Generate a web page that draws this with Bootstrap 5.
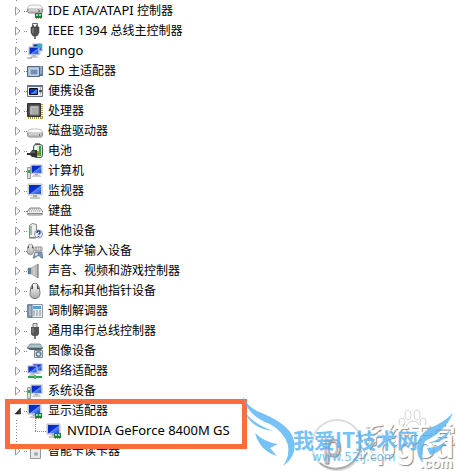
<!DOCTYPE html>
<html lang="zh-CN">
<head>
<meta charset="utf-8">
<meta name="viewport" content="width=device-width, initial-scale=1">
<title>设备管理器</title>
<link href="https://cdn.jsdelivr.net/npm/bootstrap@5.3.0/dist/css/bootstrap.min.css" rel="stylesheet">
<style>
body{background:#fff;color:#000;font-family:"Noto Sans","Noto Sans CJK SC",sans-serif;font-size:12px;line-height:20px}
.device-window{min-height:100vh;overflow:hidden;padding-top:1px}
.device-row{height:20px;padding-left:15px}
.device-row svg{flex:none}
.tree-toggle{width:9px;height:20px;padding:0;border:0;background:none;display:flex;align-items:center}
.dots{width:3px;height:20px;background:linear-gradient(90deg,#888 1px,transparent 1px) 0 50%/2px 1px repeat-x}
.device-icon{width:16px;height:16px;margin-right:5px}
.latin{font-size:13px;line-height:1}
.trunk{background:linear-gradient(#888 1px,transparent 1px) 16px 0/1px 3px repeat-y;top:-1px;bottom:12px;width:17px}
.toggle-back{padding:2px 0;background:#fff;height:16px;width:6px}
.child-row{padding-left:35px}
.child-row .dots{width:11px}
.branch{left:35px;top:17px;height:14px;width:1px;background:linear-gradient(#888 1px,transparent 1px) 0 0/1px 2px repeat-y}
.highlight-frame{left:5px;top:-2px;bottom:-8px;width:242px;border:5px solid #ff6c3b;z-index:2}
.watermark{right:0;bottom:0;z-index:3;pointer-events:none}
.embossed{text-shadow:1px 1px 1px #888}
.han-mark{font-family:"Noto Sans CJK SC",sans-serif}
.site-mark{font-family:"Liberation Sans",sans-serif}
.blue-site{font-family:"DejaVu Sans",sans-serif}
</style>
<script src="https://cdn.jsdelivr.net/npm/bootstrap@5.3.0/dist/js/bootstrap.bundle.min.js"></script>
</head>
<body>
<svg width="0" height="0" class="position-absolute" aria-hidden="true">
<defs>
<linearGradient id="blue" x1="0" y1="0" x2="1" y2="1"><stop offset="0" stop-color="#0828c0"/><stop offset=".5" stop-color="#0a30d0"/><stop offset=".55" stop-color="#5a8cf4"/><stop offset="1" stop-color="#1848d8"/></linearGradient>
<linearGradient id="silver" x1="0" y1="0" x2="0" y2="1"><stop offset="0" stop-color="#fafafa"/><stop offset="1" stop-color="#aaa"/></linearGradient>
<symbol id="closed" viewBox="0 0 6 10"><path d="M.5 1v8l4.500-4z" fill="#fff" stroke="#999"/></symbol>
<symbol id="open" viewBox="0 0 6 10"><path d="M5.500 2v6H0z" fill="#333" stroke="#111" stroke-width=".5"/></symbol>
<symbol id="card" viewBox="0 0 8 6"><path d="M0 0h7v5H0z" fill="#168040"/><path d="M1 1h2v2H1zM4 1h2v2H4z" fill="#9fd4a8"/><path d="M1 5h1v1H1zM3 5h1v1H3zM5 5h1v1H5z" fill="#b99c30"/></symbol>
<symbol id="disk" viewBox="0 0 16 16"><path d="M.5 9Q1 6 5 6h6q4 0 4.500 3v3q0 2-2 2h-11q-2 0-2-2z" fill="#fafafa" stroke="#aaa" stroke-width=".7"/><path d="M.5 10h15v2q0 2-2 2h-11q-2 0-2-2z" fill="#bbb" stroke="#888" stroke-width=".7"/><path d="M2 11h12" stroke="#e8e8e8"/><path d="M12 11h1v2h-1z" fill="#1ab030"/></symbol>
<symbol id="ide" viewBox="0 0 16 16"><use href="#disk" y="-4" width="16" height="16"/><path d="M11 6h1v4h-1zM14 7h1v3h-1z" fill="#999"/><use href="#card" x="8" y="10" width="8" height="6"/></symbol>
<symbol id="plug" viewBox="0 0 16 16"><path d="M5.500.5h5v4h-5z" fill="#eee" stroke="#666"/><path d="M6 2h1v2H6zM9 2h1v2H9z" fill="#555"/><path d="M4 4h8v6l-2 3H6l-2-3z" fill="#505050" stroke="#333" stroke-width=".5"/><path d="M6 5v5" stroke="#999"/><path d="M7 13h2v3H7z" fill="#777"/></symbol>
<symbol id="monitor" viewBox="0 0 16 16"><path d="M1 1h14v11H1z" fill="#eee" stroke="#aaa" stroke-width=".7"/><path d="M2 2h12v9H2z" fill="url(#blue)"/><path d="M6 12h4v2H6z" fill="#aaa"/><path d="M4 14h8l1 1.500H3z" fill="#ddd" stroke="#999" stroke-width=".5"/></symbol>
<symbol id="network" viewBox="0 0 16 16"><use href="#monitor" x="5" y="0" width="11" height="11"/><use href="#monitor" x="0" y="2" width="11" height="11"/><path d="M1 14h14" stroke="#29a352" stroke-width="2"/><path d="M7 12h2v4H7z" fill="#43c46f"/></symbol>
<symbol id="jungo" viewBox="0 0 16 16"><use href="#monitor" x="5" y="0" width="11" height="11"/><use href="#monitor" x="1" y="3" width="12" height="12"/><circle cx="12.500" cy="3" r="2.500" fill="#38a9b7"/><path d="M0 15h5" stroke="#888"/></symbol>
<symbol id="sd" viewBox="0 0 16 16"><path d="M.5 3.500h12v10H.5z" fill="#a8bdd6" stroke="#50657e"/><path d="M3 6h8v6H3z" fill="#6f90b4" stroke="#d4e0ef"/><path d="M13 3h3v10h-3z" fill="#547ca6"/><path d="M13 4h2m-2 2h2m-2 2h2m-2 2h2" stroke="#fff" stroke-width=".7"/></symbol>
<symbol id="portable" viewBox="0 0 16 16"><path d="M.5 2.500h15v11H.5z" fill="#eee" stroke="#65758a"/><path d="M0 2h16v2H0z" fill="#63758e"/><path d="M2.500 5.500h8v6h-8z" fill="url(#blue)" stroke="#111"/><circle cx="13.500" cy="8" r="1.500" fill="#444"/><path d="M13 5h1m-1 6h1" stroke="#888"/></symbol>
<symbol id="cpu" viewBox="0 0 16 16"><path d="M1 15h15M15 1v15" stroke="#b49243" stroke-width="2" stroke-dasharray="1 1"/><path d="M.5.500h13v13H.5z" fill="#444" stroke="#333"/><path d="M3 3h9v9H3z" fill="#aaa" stroke="#777"/><path d="M4 11V4h7" stroke="#ccc" fill="none"/></symbol>
<symbol id="battery" viewBox="0 0 16 16"><path d="M8 0h5v2H8z" fill="#888"/><rect x="6.500" y="1.500" width="9" height="13" rx="2.500" fill="#d5ead2" stroke="#555"/><path d="M9 8h5v5H9z" fill="#25a63b"/><path d="M12 3h2v6h-2z" fill="#25a63b"/><path d="M8 3h2v4H8z" fill="#fff"/><path d="M0 10h3l2-3h5v7H5l-2-2H0z" fill="#333"/><path d="M4 9h4" stroke="#888"/><path d="M10 9h3M10 12h3" stroke="#b8922a" stroke-width="1.500"/></symbol>
<symbol id="computer" viewBox="0 0 16 16"><use href="#monitor" x="3" y="0" width="13" height="15"/><path d="M.5 4.500h3v11h-3z" fill="#ddd" stroke="#999"/><path d="M1 7h2v3H1z" fill="#21ad42"/></symbol>
<symbol id="keyboard" viewBox="0 0 16 16"><path d="M3 5h10l3 4v2l-2 1H2l-2-1V9z" fill="#eee" stroke="#666" stroke-width=".8"/><path d="M3 6h10M2 8h12" stroke="#888" stroke-dasharray="1 1"/><path d="M1 10.500h14" stroke="#888"/></symbol>
<symbol id="other" viewBox="0 0 16 16"><path d="M2.500 2.500l3-2 4 1v13h-7z" fill="#eee" stroke="#888"/><path d="M4 3v9" stroke="#24a743"/><path d="M2 15h7" stroke="#777"/><circle cx="11.500" cy="11" r="4" fill="#e8effa" stroke="#8793a6"/><path d="M10 10q0-2 1.500-2t1.500 1.500-1.500 2M11.500 13v1" fill="none" stroke="#2448b0" stroke-width="1.500"/></symbol>
<symbol id="mouse" viewBox="0 0 16 16"><path d="M6 .5q3-.5 4 0 3 3 3 9 0 6-5 6t-5-5q0-7 3-10z" fill="url(#silver)" stroke="#777"/><path d="M6 1L4 6h2zM10 1l2 5h-2z" fill="#444"/><path d="M7 1h2v5H7z" fill="#eee"/></symbol>
<symbol id="hid" viewBox="0 0 16 16"><use href="#mouse" x="-2" y="0" width="11" height="13"/><path d="M8 4h7v4H8z" fill="#ddd" stroke="#999"/><path d="M9 5h6M9 7h6" stroke="#888" stroke-dasharray="1 1"/><path d="M8 9h7l1 6h-2l-1-2h-3l-2 2H6z" fill="#7797b8" stroke="#607185" stroke-width=".6"/><path d="M9 10v3M8 11h3" stroke="#fff"/></symbol>
<symbol id="sound" viewBox="0 0 16 16"><path d="M1 5h3l7-4v14l-7-4H1z" fill="#bbb" stroke="#999" stroke-width=".6"/><path d="M1 5h3v6H1z" fill="#557f99"/><path d="M7 4v8" stroke="#ddd"/><path d="M11 1v14" stroke="#777"/></symbol>
<symbol id="modem" viewBox="0 0 16 16"><path d="M.5 1.500h15v13H.5z" fill="#e8eef4" stroke="#8a98a7"/><path d="M1 2h4v12H1z" fill="#a4b4c5" stroke="#5f7387"/><path d="M6 3h8v3H6z" fill="#52a1d5"/><path d="M6 8h9M6 10h9M6 12h9" stroke="#888" stroke-dasharray="2 1"/></symbol>
<symbol id="usb" viewBox="0 0 16 16"><path d="M6 .5h4v4H6z" fill="#ddd" stroke="#777"/><path d="M4 4h8v6q0 3-3 3H7q-3 0-3-3z" fill="#555"/><path d="M6 5v5" stroke="#999"/><path d="M7 13h2v3H7z" fill="#777"/></symbol>
<symbol id="imaging" viewBox="0 0 16 16"><path d="M3 1h10l3 4H0z" fill="#a9c3ca" stroke="#5e777d" stroke-width=".7"/><path d="M0 5h16l-2 2H3z" fill="#555f66"/><path d="M7.500 7.500h8v7h-8z" fill="#e5eaef" stroke="#7f8a94"/><circle cx="11.500" cy="11" r="3" fill="#647e98"/><circle cx="11.500" cy="11" r="1.500" fill="#d7e7f1"/></symbol>
<symbol id="display" viewBox="0 0 16 16"><use href="#monitor" x="0" y="0" width="15" height="15"/><use href="#card" x="8" y="10" width="8" height="6"/></symbol>
<symbol id="smart" viewBox="0 0 16 16"><path d="M3.500 1.500h10v14h-10z" fill="#e8e8e8" stroke="#999"/><circle cx="9" cy="11" r="2" fill="#aaa"/></symbol>
</defs>
</svg>
<main class="device-window position-relative">
<div class="position-relative">
<div class="trunk position-absolute" aria-hidden="true"></div>
<ul class="list-unstyled mb-0 position-relative" id="devices"></ul>
</div>
<svg class="watermark position-absolute" width="229" height="100" viewBox="0 0 229 100" aria-hidden="true">
<g fill="#fff" stroke="#d4d4d4"><ellipse cx="178" cy="43" rx="3" ry="5"/><ellipse cx="187" cy="43" rx="3" ry="5"/><ellipse cx="172" cy="50" rx="3" ry="4"/><ellipse cx="193" cy="50" rx="3" ry="4"/><path d="M183 49q6 0 8 9-8 6-16 0 2-9 8-9z"/></g>
<circle cx="107" cy="73" r="25" fill="none" stroke="#ddd" stroke-width="2"/><path d="M128 60a25 25 0 0 1-38 31" fill="none" stroke="#aaa" stroke-width="2"/>
<g fill="#fff" class="embossed"><text x="93" y="84" class="site-mark" font-size="32" stroke="#bbb">p</text><text x="133" y="71" class="han-mark" font-weight="700" font-size="23">系统天堂</text><text x="128" y="86" class="site-mark" font-weight="700" font-size="32">xpgod</text><text x="190" y="96" class="site-mark" font-weight="700" font-size="14">.com</text></g>
<g fill="#55b4f4" opacity=".8"><path d="M13 24Q17 34 27 39 55 50 62 63 70 82 53 94 60 84 58 73 54 60 40 52 17 44 13 24zM14 37Q19 50 43 59 19 56 14 37zM25 61Q34 70 48 72L40 76 47 84Q30 79 25 61z"/><path d="M223 41Q213 51 200 56 188 62 187 75 187 85 193 91 191 80 195 69 215 60 223 41zM220 58Q212 67 198 71 216 71 220 58zM216 69Q208 76 197 76L200 83Q211 81 216 69z"/>
<text x="63" y="76" class="han-mark" font-size="21" font-weight="700">我爱IT技术网</text><text x="82" y="89" class="blue-site" font-size="12">www.52ij.com</text></g>
</svg>
</main>
<script>
const devices=[["ide","IDE ATA/ATAPI 控制器"],["plug","IEEE 1394 总线主控制器"],["jungo","Jungo"],["sd","SD 主适配器"],["portable","便携设备"],["cpu","处理器"],["disk","磁盘驱动器"],["battery","电池"],["computer","计算机"],["monitor","监视器"],["keyboard","键盘"],["other","其他设备"],["hid","人体学输入设备"],["sound","声音、视频和游戏控制器"],["mouse","鼠标和其他指针设备"],["modem","调制解调器"],["usb","通用串行总线控制器"],["imaging","图像设备"],["network","网络适配器"],["computer","系统设备"],["display","显示适配器",["NVIDIA GeForce 8400M GS"]],["smart","智能卡读卡器"]];
const label=t=>t.replace(/[A-Za-z0-9\/]+(?: [A-Za-z0-9\/]+)* ?/g,m=>`<span class="latin">${m}</span>`);
const icon=n=>`<svg class="device-icon" aria-hidden="true"><use href="#${n}"/></svg>`;
document.getElementById("devices").innerHTML=devices.map(([n,t,kids])=>`<li class="position-relative"><div class="device-row d-flex align-items-center"><button type="button" class="tree-toggle" aria-label="${t}" aria-expanded="${!!kids}"><svg class="toggle-back"><use href="#${kids?"open":"closed"}"/></svg></button><span class="dots"></span>${icon(n)}<span class="text-nowrap">${label(t)}</span></div>${kids?`<ul class="list-unstyled mb-0">${kids.map(k=>`<li class="device-row child-row d-flex align-items-center"><span class="dots"></span>${icon(n)}<span class="text-nowrap">${label(k)}</span></li>`).join("")}</ul><span class="branch position-absolute"></span><span class="highlight-frame position-absolute"></span>`:""}</li>`).join("");
</script>
</body>
</html>
